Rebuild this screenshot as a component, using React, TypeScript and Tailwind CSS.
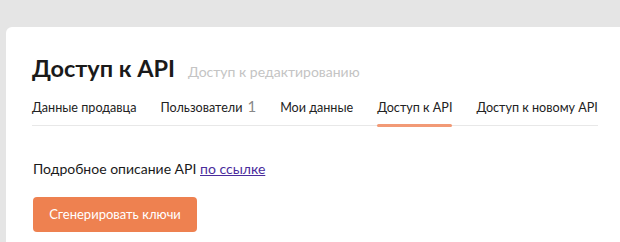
import React from "react";

export default function App() {
  const tabs = [
    { label: "Данные продавца" },
    { label: "Пользователи", count: "1" },
    { label: "Мои данные" },
    { label: "Доступ к API", active: true },
    { label: "Доступ к новому API" },
  ];
  return (
    <div className="w-[620px] h-[242px] overflow-hidden bg-[#e5e5e5] pt-[27px] pl-[6px]" style={{ fontFamily: "Lato, 'Noto Sans', sans-serif" }}>
      <div className="bg-white rounded-tl-[6px] h-[260px] pl-[26px] pt-[26px]">
        <div className="flex items-baseline gap-[13px] whitespace-nowrap">
          <h1 className="text-[23.5px] font-bold text-[#1a1a1a] leading-[30px]">Доступ к API</h1>
          <span className="text-[14px] text-[#c4c4c4]">Доступ к редактированию</span>
        </div>
        <div className="mt-[12px] w-[566px] flex items-end gap-[24px] border-b border-[#e8e8e8] text-[12.6px] text-[#222] whitespace-nowrap">
          {tabs.map((t) => (
            <div key={t.label} className="relative pb-[9px] pt-[3px] leading-[16px]">
              <span>{t.label}</span>
              {t.count && <span className="ml-[5px] text-[15px] leading-[16px] text-[#888]">{t.count}</span>}
              {t.active && <div className="absolute left-0 right-0 bottom-[-2px] h-[3px] rounded-full bg-[#f29a76]" />}
            </div>
          ))}
        </div>
        <p className="mt-[32px] pl-[1px] text-[14px] text-[#1a1a1a]">
          Подробное описание API <a className="text-[#4a2c9c] underline">по ссылке</a>
        </p>
        <button className="mt-[18px] ml-[1px] w-[164px] h-[35px] rounded-[4px] bg-[#ee8150] text-white text-[13px]">
          Сгенерировать ключи
        </button>
      </div>
    </div>
  );
}
